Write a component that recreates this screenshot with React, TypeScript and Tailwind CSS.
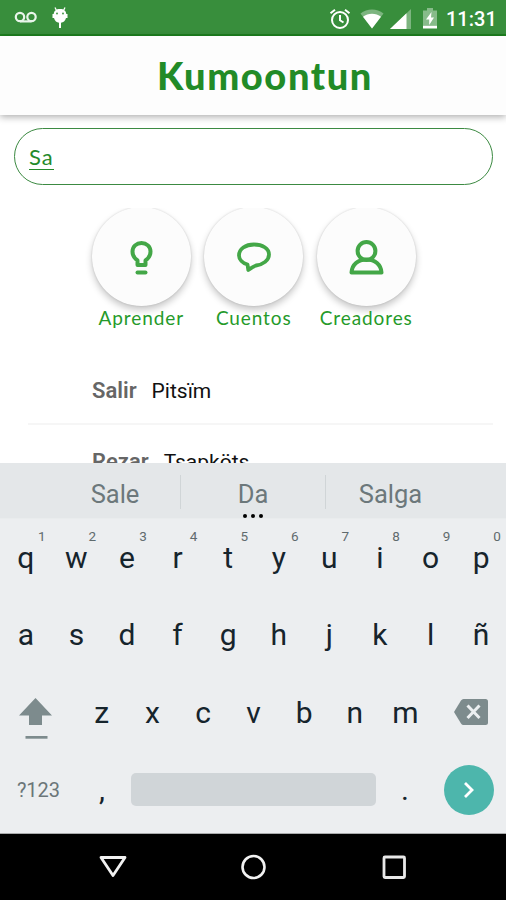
import type React from "react"

interface KeyData {
  label: string
  hint?: string
}

const firstRow: KeyData[] = [
  { label: "q", hint: "1" },
  { label: "w", hint: "2" },
  { label: "e", hint: "3" },
  { label: "r", hint: "4" },
  { label: "t", hint: "5" },
  { label: "y", hint: "6" },
  { label: "u", hint: "7" },
  { label: "i", hint: "8" },
  { label: "o", hint: "9" },
  { label: "p", hint: "0" },
]
const secondRow: KeyData[] = ["a", "s", "d", "f", "g", "h", "j", "k", "l", "ñ"].map((label) => ({ label }))
const thirdRow: KeyData[] = ["z", "x", "c", "v", "b", "n", "m"].map((label) => ({ label }))

const words = [
  { es: "Salir", ayuujk: "Pitsïm" },
  { es: "Rezar", ayuujk: "Tsapköts" },
]

const StatusBar: React.FC = () => (
  <div className="h-[36px] shrink-0 bg-[#388e3c] border-b-2 border-[#1d811f] flex items-center justify-between pl-[14px] pr-[10px] text-white">
    <div className="flex items-center">
      {/* Buzón de voz */}
      <svg width="24" height="14" viewBox="0 0 24 14" fill="none" stroke="#e9f5ea" strokeWidth="2.2">
        <circle cx="6" cy="7" r="4.2" />
        <circle cx="17.5" cy="7" r="4.2" />
        <path d="M6 11.4h11.5" />
      </svg>
      {/* Android */}
      <svg className="ml-[12px] mt-[2px]" width="20" height="24" viewBox="0 0 20 24" fill="#fff">
        <path d="M5 1.500l1.500 3M15 1.500l-1.500 3" stroke="#fff" strokeWidth="1.300" />
        <path d="M10 3c4 0 6 2 6.300 5h1.200v4h-1.500c-.8 3-2.800 4.500-5 4.800V22H9v-5.200c-2.200-.3-4.200-1.800-5-4.800H2.500V8h1.200C4 5 6 3 10 3z" />
        <circle cx="7" cy="7.500" r=".9" fill="#388e3c" />
        <circle cx="13" cy="7.500" r=".9" fill="#388e3c" />
      </svg>
    </div>
    <div className="flex items-center pt-[3px]">
      {/* Alarma */}
      <svg width="22" height="22" viewBox="0 0 22 22" fill="none" stroke="#fff" strokeWidth="2">
        <circle cx="11" cy="12" r="8" />
        <path d="M11 7v5.300l3.500 2.200M1.500 5.300L6 1.700M20.500 5.300L16 1.700" />
      </svg>
      <svg className="ml-[9px]" width="24" height="20" viewBox="0 0 24 20">
        <path d="M12 19.500L.5 4.500C7-.8 17-.8 23.500 4.500z" fill="#fff" opacity=".35" />
        <path d="M12 19.500L3 7.700c5-4 13-4 18 0z" fill="#fff" />
      </svg>
      <svg className="ml-[6px]" width="21" height="20" viewBox="0 0 21 20">
        <path d="M0 20L21 0v20z" fill="#fff" opacity=".35" />
        <path d="M0 20L16.500 4.300V20z" fill="#fff" />
      </svg>
      <svg className="ml-[12px]" width="14" height="21" viewBox="0 0 14 21">
        <path d="M0 2.500h4V0h6v2.500h4V17H0z" fill="#fff" opacity=".4" />
        <path d="M0 17.500h14v3H0z" fill="#fff" />
        <path d="M8.500 4L3 11.500h3.200V17L11 9.500H8z" fill="#fff" />
      </svg>
      <span className="ml-[9px] w-[50px] text-[20px] leading-[22px] font-medium whitespace-nowrap">11:31</span>
    </div>
  </div>
)

interface CircleActionProps {
  label: string
  children: React.ReactNode
}

const CircleAction: React.FC<CircleActionProps> = ({ label, children }) => (
  <div className="w-[112.500px] flex flex-col items-center">
    <div className="h-[107px] w-full overflow-hidden flex justify-center">
      <div className="-mt-px size-[99px] shrink-0 rounded-full bg-[#fcfcfc] shadow-[0_4px_7px_rgba(0,0,0,0.22),0_0_2px_rgba(0,0,0,0.15)] flex items-center justify-center">
        {children}
      </div>
    </div>
    <span className="-mt-[8px] font-['Lato'] text-[19px] leading-[22px] tracking-[0.900px] text-[#259a2a] whitespace-nowrap relative">
      {label}
    </span>
  </div>
)

const LetterKey: React.FC<{ data: KeyData }> = ({ data }) => (
  <div className="w-[50.600px] h-full relative pl-px flex items-center justify-center text-[30px] leading-[36px] text-[#16242c]">
    {data.label}
    {data.hint && (
      <span className="absolute top-[9px] left-[38px] text-[13.500px] leading-[17px] text-[#5f6a6d]">{data.hint}</span>
    )}
  </div>
)

const Keyboard: React.FC = () => (
  <div className="h-[371px] shrink-0 bg-[#eceef0] border-b border-[#a9abac]">
    {/* Sugerencias */}
    <div className="h-[56px] bg-[#e4e7e9] border-b border-[#e9eced] flex items-center text-[25.500px] leading-[30px] text-[#6c787b] relative">
      <div className="w-[180px] pl-[50px] pt-[7px] text-center">Sale</div>
      <div className="mt-[3px] w-px h-[34px] bg-[#d0d5d7]" />
      <div className="w-[144px] pt-[7px] text-center">Da</div>
      <div className="mt-[3px] w-px h-[34px] bg-[#d0d5d7]" />
      <div className="w-[129px] pt-[7px] text-center">Salga</div>
      <div className="absolute left-[243px] top-[51px] flex gap-[4px]">
        <i className="size-[4px] rounded-full bg-black" />
        <i className="size-[4px] rounded-full bg-black" />
        <i className="size-[4px] rounded-full bg-black" />
      </div>
    </div>

    <div className="h-[77.500px] flex">
      {firstRow.map((k) => (
        <LetterKey key={k.label} data={k} />
      ))}
    </div>
    <div className="h-[77.500px] flex">
      {secondRow.map((k) => (
        <LetterKey key={k.label} data={k} />
      ))}
    </div>
    <div className="h-[77.500px] flex items-center">
      <div className="w-[76px] pl-[19px]">
        {/* Mayúsculas */}
        <svg className="mt-[12px]" width="34" height="42" viewBox="0 0 34 42" fill="#7d8b8d">
          <path d="M16.500 0L33 17.500H23V27H10V17.500H0z" />
          <path d="M6.500 38h22v2.700h-22z" />
        </svg>
      </div>
      {thirdRow.map((k) => (
        <LetterKey key={k.label} data={k} />
      ))}
      {/* Borrar */}
      <svg className="ml-[24px] -mt-[2px]" width="34" height="26" viewBox="0 0 34 26">
        <path d="M9.500 0H31.500Q34 0 34 2.500V23.500Q34 26 31.500 26H9.500Q8 26 7 24.500L0 13L7 1.500Q8 0 9.500 0z" fill="#7d8b8d" />
        <path d="M13.500 6.500l12 12.500M25.500 6.500l-12 12.500" stroke="#eceff1" strokeWidth="3" />
      </svg>
    </div>
    <div className="h-[77.500px] flex items-center text-[#16242c]">
      <div className="w-[77px] text-center text-[20px] leading-[24px] text-[#6b7679]">?123</div>
      <div className="w-[50px] text-center text-[30px] leading-[36px]">,</div>
      <div className="ml-[4px] -mt-[2px] w-[245px] h-[33px] rounded-[5px] bg-[#d0d5d8]" />
      <div className="ml-[4px] w-[50px] text-center text-[30px] leading-[36px]">.</div>
      <div className="ml-[14px] -mt-px size-[50px] rounded-full bg-[#4db6ac] flex items-center justify-center">
        <svg width="12" height="18" viewBox="0 0 12 18" fill="none" stroke="#fff" strokeWidth="2.800">
          <path d="M2 2l7 7-7 7" />
        </svg>
      </div>
    </div>
  </div>
)

const NavigationBar: React.FC = () => (
  <div className="h-[66px] shrink-0 bg-black flex items-center justify-center gap-[112px]">
    <svg width="29" height="24" viewBox="0 0 29 24" fill="none" stroke="#f2f2f2" strokeWidth="2.800">
      <path d="M2 2.500h24l-12 18z" strokeLinejoin="round" />
    </svg>
    <svg width="28" height="28" viewBox="0 0 28 28" fill="none" stroke="#f2f2f2" strokeWidth="2.600">
      <circle cx="13.500" cy="14" r="11" />
    </svg>
    <svg width="28" height="28" viewBox="0 0 28 28" fill="none" stroke="#e8e8e8" strokeWidth="2.800">
      <rect x="4" y="4" width="20.500" height="20.500" rx="1" />
    </svg>
  </div>
)

export default function App() {
  return (
    <div className="w-[506px] h-[900px] flex flex-col overflow-hidden bg-white font-['Roboto',sans-serif]">
      <StatusBar />

      {/* Encabezado */}
      <header className="h-[79px] shrink-0 relative bg-[#fdfdfd] shadow-[0_2px_7px_rgba(0,0,0,0.32)] pl-[157px] pt-[16px]">
        <h1 className="font-['Lato'] font-black text-[38px] leading-[46px] tracking-[1.600px] text-[#228b27] whitespace-nowrap">Kumoontun</h1>
      </header>

      <main className="h-[348px] shrink-0 overflow-hidden">
        {/* Buscador */}
        <div className="mt-[13px] ml-[14px] w-[479px] h-[57px] rounded-[29px] border-[1.500px] border-[#3c8a42] flex items-center pl-[14px]">
          <span className="font-['Lato'] text-[22px] leading-[25px] tracking-[0.900px] text-[#258a2b] border-b border-[#258a2b]">Sa</span>
        </div>

        <div className="mt-[23px] ml-[85px] flex">
          <CircleAction label="Aprender">
            <svg width="24" height="36" viewBox="0 0 24 36" fill="none" stroke="#43a747" strokeWidth="4" strokeLinejoin="round" strokeLinecap="round">
              <path d="M8.500 26V21.500C5 19 3.500 16.500 3.500 12.500C3.500 7.500 7.500 4 12.500 4S21.500 7.500 21.500 12.500C21.500 16.500 20 19 16.500 21.500V26z" />
              <path d="M8.500 33.500h8" />
            </svg>
          </CircleAction>
          <CircleAction label="Cuentos">
            <svg width="36" height="32" viewBox="0 0 36 32" fill="none" stroke="#43a747" strokeWidth="3.800" strokeLinejoin="round">
              <path d="M18 3.500C26.500 3.500 33 7.500 33 13.500S27 23.500 20 24.500C17 25.500 14.500 27.500 12.300 29L11.500 23.500C6.500 22 3 18.500 3 14.500C3 8 9.500 3.500 18 3.500z" />
            </svg>
          </CircleAction>
          <CircleAction label="Creadores">
            <svg width="36" height="36" viewBox="0 0 36 36" fill="none" stroke="#43a747" strokeWidth="4" strokeLinejoin="round">
              <circle cx="18.500" cy="12" r="8.900" />
              <path d="M3.500 33.500C4 25.500 10 20.500 18.500 20.500S33 25.500 33.500 33.500z" />
            </svg>
          </CircleAction>
        </div>

        {/* Resultados */}
        <div className="mt-[25px] ml-[28px] w-[465px]">
          {words.map((w) => (
            <div key={w.es} className="h-[71px] border-b-2 border-[#f6f6f6] flex items-center gap-[15px] pl-[64px] pt-[5px] leading-[26px]">
              <b className="text-[22px] font-semibold text-[#666]">{w.es}</b>
              <span className="text-[21px] text-[#111]">{w.ayuujk}</span>
            </div>
          ))}
        </div>
      </main>

      <Keyboard />
      <NavigationBar />
    </div>
  )
}
